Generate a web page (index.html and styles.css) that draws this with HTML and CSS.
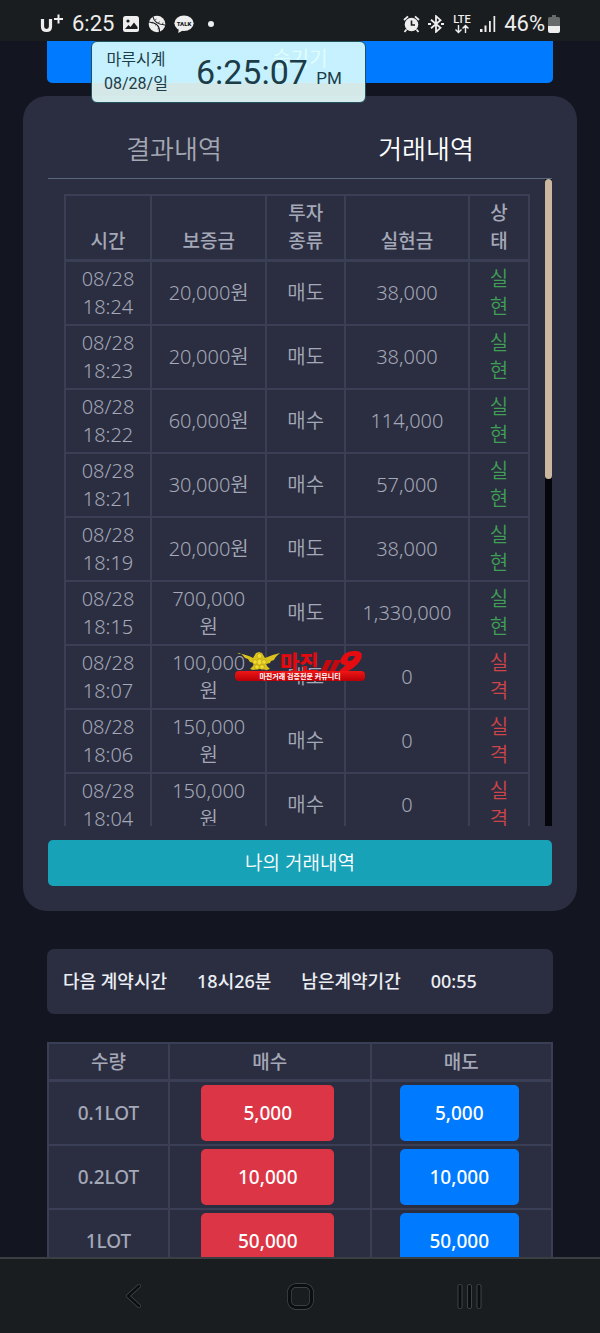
FILE: index.html
```html
<!DOCTYPE html>
<html lang="ko">
<head>
<meta charset="utf-8">
<meta name="viewport" content="width=device-width, initial-scale=1">
<title>거래내역</title>
<link rel="stylesheet" href="styles.css">
</head>
<body>
<div class="screen">
  <header class="status">
    <div class="status-group">
      <svg class="icon" width="24" height="24" viewBox="0 0 24 24" fill="none" stroke="#eee"><path d="M2.500 7v7.500q0 4 4 4t4-4V7" stroke-width="3.200"/><path d="M18.500 2.500v9M14 7h9" stroke-width="2"/></svg>
      <span class="status-text">6:25</span>
      <svg class="icon" width="18" height="18" viewBox="0 0 18 18"><rect x="1" y="1" width="16" height="16" rx="2.500" fill="#eee"/><circle cx="6" cy="6" r="1.600" fill="#1a1d1f"/><path d="M3 14l3.500-4 2 2 3.500-4.500 3.500 4.500V14z" fill="#1a1d1f"/></svg>
      <svg class="icon" width="18" height="18" viewBox="0 0 18 18"><circle cx="9" cy="9" r="8.300" fill="#eee"/><path d="M5 1.500Q6 9 17 10M1 7Q12 8 11.500 17" fill="none" stroke="#1a1d1f" stroke-width="1.100"/><path d="M8.500 4l-1.500 1M11.500 6.500l-1 1.500M15 7.500l-.5 2M4 8.500l.5-1.700M7.500 10.500l1-1.500M9.500 14l1.700-.8" stroke="#1a1d1f" stroke-width=".7"/></svg>
      <svg class="icon" width="20" height="19" viewBox="0 0 20 19"><ellipse cx="10" cy="8.300" rx="9.600" ry="7.800" fill="#eee"/><path d="M5 13l-.8 5 5.500-3z" fill="#eee"/><text x="10" y="10.500" class="talk" text-anchor="middle">TALK</text></svg>
      <span class="status-dot"></span>
    </div>
    <div class="status-group status-right">
      <svg class="icon" width="17" height="18" viewBox="0 0 17 18"><circle cx="8.500" cy="9.500" r="6.800" fill="#eee"/><path d="M1 5l4-3.600M16 5l-4-3.600M3.500 14.500L1.500 17M13.500 14.500l2 2.500" stroke="#eee" stroke-width="1.800"/><path d="M8.500 5.500v4.500h3.500" fill="none" stroke="#1a1d1f" stroke-width="1.600"/></svg>
      <svg class="icon" width="16" height="18" viewBox="0 0 16 18" fill="none" stroke="#eee"><path d="M3 4.800l9.500 8L8 16.800V1.200l4.500 4L3 13.200" stroke-width="1.800"/><path d="M0 9h3M13 9h3" stroke-width="2"/></svg>
      <svg class="icon" width="20" height="22" viewBox="0 0 20 22"><text x="10" y="10" class="lte" text-anchor="middle">LTE</text><path d="M6.500 12v7M3.500 16.500l3 3 3-3M13.500 20v-7M10.500 15.500l3-3 3 3" fill="none" stroke="#eee" stroke-width="1.400"/></svg>
      <svg class="icon" width="16" height="18" viewBox="0 0 16 18" fill="#eee"><path d="M0 14h2.500v3H0zM4.500 10.500h2V17h-2zM9 6h1.800v11H9zM13.500 1h1.700v16h-1.700z"/></svg>
      <span class="status-text">46%</span>
      <svg class="icon battery" width="12" height="18" viewBox="0 0 12 18"><path d="M4 0h4v2h2.500q1.500 0 1.500 1.500V11H0V3.500Q0 2 1.500 2H4z" fill="#666a6b"/><path d="M0 11h12v5q0 2-2 2H2q-2 0-2-2z" fill="#eee"/></svg>
    </div>
  </header>

  <main class="page">
    <button class="hide-button" type="button">숨기기</button>

    <section class="panel">
      <div class="tabs">
        <button class="tab" type="button">결과내역</button>
        <button class="tab tab-active" type="button">거래내역</button>
      </div>
      <div class="history">
        <div class="history-view">
          <table class="table trades">
            <colgroup><col class="c-time"><col class="c-margin"><col class="c-kind"><col class="c-profit"><col class="c-state"></colgroup>
            <thead><tr><th>시간</th><th>보증금</th><th>투자 종류</th><th>실현금</th><th>상태</th></tr></thead>
            <tbody>
              <tr><td>08/28 18:24</td><td>20,000원</td><td>매도</td><td>38,000</td><td class="win">실현</td></tr>
              <tr><td>08/28 18:23</td><td>20,000원</td><td>매도</td><td>38,000</td><td class="win">실현</td></tr>
              <tr><td>08/28 18:22</td><td>60,000원</td><td>매수</td><td>114,000</td><td class="win">실현</td></tr>
              <tr><td>08/28 18:21</td><td>30,000원</td><td>매수</td><td>57,000</td><td class="win">실현</td></tr>
              <tr><td>08/28 18:19</td><td>20,000원</td><td>매도</td><td>38,000</td><td class="win">실현</td></tr>
              <tr><td>08/28 18:15</td><td>700,000원</td><td>매도</td><td>1,330,000</td><td class="win">실현</td></tr>
              <tr><td>08/28 18:07</td><td>100,000원</td><td>매도</td><td>0</td><td class="loss">실격</td></tr>
              <tr><td>08/28 18:06</td><td>150,000원</td><td>매수</td><td>0</td><td class="loss">실격</td></tr>
              <tr><td>08/28 18:04</td><td>150,000원</td><td>매수</td><td>0</td><td class="loss">실격</td></tr>
            </tbody>
          </table>
        </div>
        <div class="track"><div class="thumb"></div></div>
      </div>
      <button class="my-trades" type="button">나의 거래내역</button>
    </section>

    <section class="contract">
      <span>다음 계약시간</span><span>18시26분</span><span>남은계약기간</span><span>00:55</span>
    </section>

    <table class="table lots">
      <colgroup><col class="c-lot"><col class="c-buy"><col class="c-sell"></colgroup>
      <thead><tr><th>수량</th><th>매수</th><th>매도</th></tr></thead>
      <tbody>
        <tr><td>0.1LOT</td><td class="order-cell"><button class="order buy" type="button">5,000</button></td><td class="order-cell"><button class="order sell" type="button">5,000</button></td></tr>
        <tr><td>0.2LOT</td><td class="order-cell"><button class="order buy" type="button">10,000</button></td><td class="order-cell"><button class="order sell" type="button">10,000</button></td></tr>
        <tr><td>1LOT</td><td class="order-cell"><button class="order buy" type="button">50,000</button></td><td class="order-cell"><button class="order sell" type="button">50,000</button></td></tr>
      </tbody>
    </table>
  </main>

  <nav class="nav">
    <button class="nav-button" type="button" aria-label="뒤로"><svg width="28" height="28" viewBox="0 0 28 28" fill="none" stroke-linecap="round" stroke-linejoin="round"><path d="M21 4L10 14l11 10" stroke="#4b4e50" stroke-width="4"/><path d="M21 4L10 14l11 10" stroke="#0c0f11" stroke-width="2.800"/></svg></button>
    <button class="nav-button" type="button" aria-label="홈"><svg width="28" height="28" viewBox="0 0 28 28" fill="none"><rect x="3.500" y="3.500" width="22" height="22" rx="6.500" stroke="#4b4e50" stroke-width="4.400"/><rect x="3.500" y="3.500" width="22" height="22" rx="6.500" stroke="#0c0f11" stroke-width="3.200"/></svg></button>
    <button class="nav-button" type="button" aria-label="최근 앱"><svg width="28" height="28" viewBox="0 0 28 28" fill="#0c0f11" stroke="#4b4e50" stroke-width=".8"><rect x="4" y="2.500" width="4" height="24" rx="1.500"/><rect x="13.500" y="2.500" width="4" height="24" rx="1.500"/><rect x="23" y="2.500" width="4" height="24" rx="1.500"/></svg></button>
  </nav>

  <aside class="clock">
    <div class="clock-date"><span>마루시계</span><span>08/28/일</span></div>
    <div class="clock-time">6:25:07 <small class="clock-half">PM</small></div>
  </aside>

  <svg class="watermark" width="130" height="32" viewBox="0 0 130 32">
    <defs>
      <linearGradient id="band" x1="0" y1="0" x2="0" y2="1"><stop offset="0" stop-color="#f01616"/><stop offset="1" stop-color="#b80006"/></linearGradient>
    </defs>
    <path d="M2 2q11 2 16 5l3-5 3-1 3 1 3 5q6-3 15-5-5 4-6 7l-3 1-1 2-4 1 1 2 3 3-3 1-7-1-7 1-3-1 3-3 1-3-4-1-2-3-3-1q-2-3-5-5z" fill="#dbc11b"/>
    <g fill="#efdb32" stroke="#b39a12" stroke-width=".6"><circle cx="24.500" cy="5" r="2.500"/><circle cx="24.500" cy="11" r="3"/><circle cx="20" cy="11" r="2.300"/><circle cx="29" cy="11" r="2.300"/><circle cx="22" cy="16" r="2.300"/><circle cx="27" cy="16" r="2.300"/></g>
    <text x="45" y="19" class="wm-name">마진</text>
    <path d="M86 20l5-11h6.500l-6 11zM94.500 20l5-11h6.500l-6 11z" fill="#c40a0e"/>
    <path d="M104 20l7-6c-6 0-7-4-4-8 3-5 8-6 14-6 6 0 7 4 5 8-3 6-9 10-13 12zM113 10c4 0 6-2 7-5h-3c-3 0-5 2-4 5z" fill="#e40c10" fill-rule="evenodd"/>
    <rect x="0" y="20" width="130" height="10" rx="4" fill="url(#band)"/>
    <text x="65" y="28" class="wm-line" text-anchor="middle">마진거래 검증전문 커뮤니티</text>
  </svg>
</div>
</body>
</html>
```
FILE: styles.css
```css
* { box-sizing: border-box; }

body {
  margin: 0;
  background: #131520;
  color: #a4a8b7;
  font-family: "Noto Sans", "Noto Sans CJK KR", sans-serif;
  font-size: 20px;
  line-height: 28px;
}

button {
  border: 0;
  padding: 0;
  background: none;
  color: inherit;
  font: inherit;
}

.screen {
  position: relative;
  display: flex;
  flex-direction: column;
  height: 100vh;
  overflow: hidden;
}

/* Status bar */
.status {
  flex: none;
  display: flex;
  justify-content: space-between;
  align-items: center;
  padding: 10px 40px 3px;
  background: #1a1d1f;
  color: #eee;
}
.status-group { display: flex; align-items: center; gap: 8px; }
.icon { display: block; flex: none; }
.status-text { font-family: Roboto, sans-serif; font-size: 22px; }
.status-dot { width: 6px; height: 6px; margin-left: 6px; border-radius: 50%; background: #eee; }
.battery { margin-left: -5px; }
.talk { font: 900 6px Roboto, sans-serif; fill: #1a1d1f; }
.lte { font: 500 11px Roboto, sans-serif; fill: #eee; }

/* Page */
.page { flex: 1; min-height: 0; overflow: hidden; }

.hide-button {
  display: block;
  width: calc(100% - 94px);
  height: 42px;
  margin: 0 47px 13px;
  padding-bottom: 6px;
  border-radius: 0 0 5px 5px;
  background: #007bff;
  color: #fff;
}

.panel {
  margin: 0 23px 38px;
  padding: 24px 25px 25px;
  border-radius: 24px;
  background: #2b2e41;
}

.tabs { display: flex; border-bottom: 1px solid #5c6780; }
.tab {
  flex: 1;
  padding: 15px 0;
  color: #a4a8b3;
  font-size: 26px;
  font-weight: 350;
}
.tab-active { color: #fff; }

.history { display: flex; height: 647px; margin-bottom: 14px; }
.history-view { flex: 1; overflow: hidden; padding: 15px 15px 0 16px; }
.track { width: 7px; background: #05060b; }
.thumb { height: 300px; border-radius: 4px; background: #cbb89f; }

.table {
  border-collapse: collapse;
  table-layout: fixed;
  background: #2b2e41;
  text-align: center;
}
.table th, .table td { border: 2px solid #3a3f55; }
.table th {
  border-bottom-width: 3px;
  font-size: 19px;
  font-weight: 500;
  vertical-align: bottom;
}

.trades { width: 100%; }
.trades th, .trades td { padding: 3px 13px; }
.trades th { padding-bottom: 4px; }
.trades td { font-weight: 350; }
.trades th:last-child, .trades td:last-child { padding-left: 18px; padding-right: 18px; }
.c-time { width: 86px; }
.c-margin { width: 25%; }
.c-kind { width: 17%; }
.c-profit { width: 124px; }
.c-state { width: 13%; }
.win { color: #3f9f54; }
.loss { color: #cf4448; }

.my-trades {
  display: block;
  width: 100%;
  height: 46px;
  border-radius: 5px;
  background: #18a2b8;
  color: #fff;
  font-size: 19px;
  font-weight: 350;
}

.contract {
  display: flex;
  gap: 30px;
  margin: 0 47px 28px;
  padding: 18px 16px 19px;
  border-radius: 7px;
  background: #2b2e41;
  color: #eceef4;
  font-size: 18px;
  font-weight: 500;
  white-space: nowrap;
}

.lots { width: calc(100% - 94px); margin: 0 47px; font-size: 19px; font-weight: 500; }
.lots th { padding: 4px 0 3px; }
.lots td { padding: 3px 0; }
.lots .order-cell { padding-right: 4px; }
.c-lot { width: 24%; }
.c-buy { width: 40%; }
.c-sell { width: 36%; }
.order {
  display: block;
  width: 68%;
  height: 56px;
  margin: 0 auto;
  border-radius: 5px;
  color: #fff;
}
.buy { background: #dc3545; }
.sell { background: #007bff; }

/* System navigation */
.nav {
  flex: none;
  display: grid;
  grid-template-columns: repeat(3, 1fr);
  padding: 0 48px;
  height: 76px;
  border-top: 2px solid #393f43;
  background: #1a1d1f;
}
.nav-button { display: grid; place-items: center; }

/* Floating clock widget */
.clock {
  position: absolute;
  top: 41px;
  left: 91px;
  display: flex;
  align-items: center;
  gap: 28px;
  padding: 6px 23px 6px 12px;
  border: 1px solid #23525d;
  border-radius: 6px;
  background: linear-gradient(rgba(219, 253, 253, .9) 67%, rgba(232, 255, 253, .9) 69%);
  color: #1c3c48;
  font-family: Roboto, "Noto Sans CJK KR", sans-serif;
}
.clock-date {
  display: flex;
  flex-direction: column;
  align-items: center;
  font-size: 16px;
  line-height: 24px;
}
.clock-time { padding-top: 6px; font-size: 34px; }
.clock-half { font-size: 17px; }

.watermark {
  position: absolute;
  top: 50%;
  left: 50%;
  transform: translate(-50%, -50%);
}
.wm-name { font: 900 21px "Noto Sans CJK KR", sans-serif; fill: #e20a0e; }
.wm-line { font: 700 7px "Noto Sans CJK KR", sans-serif; fill: #fff; }
```
